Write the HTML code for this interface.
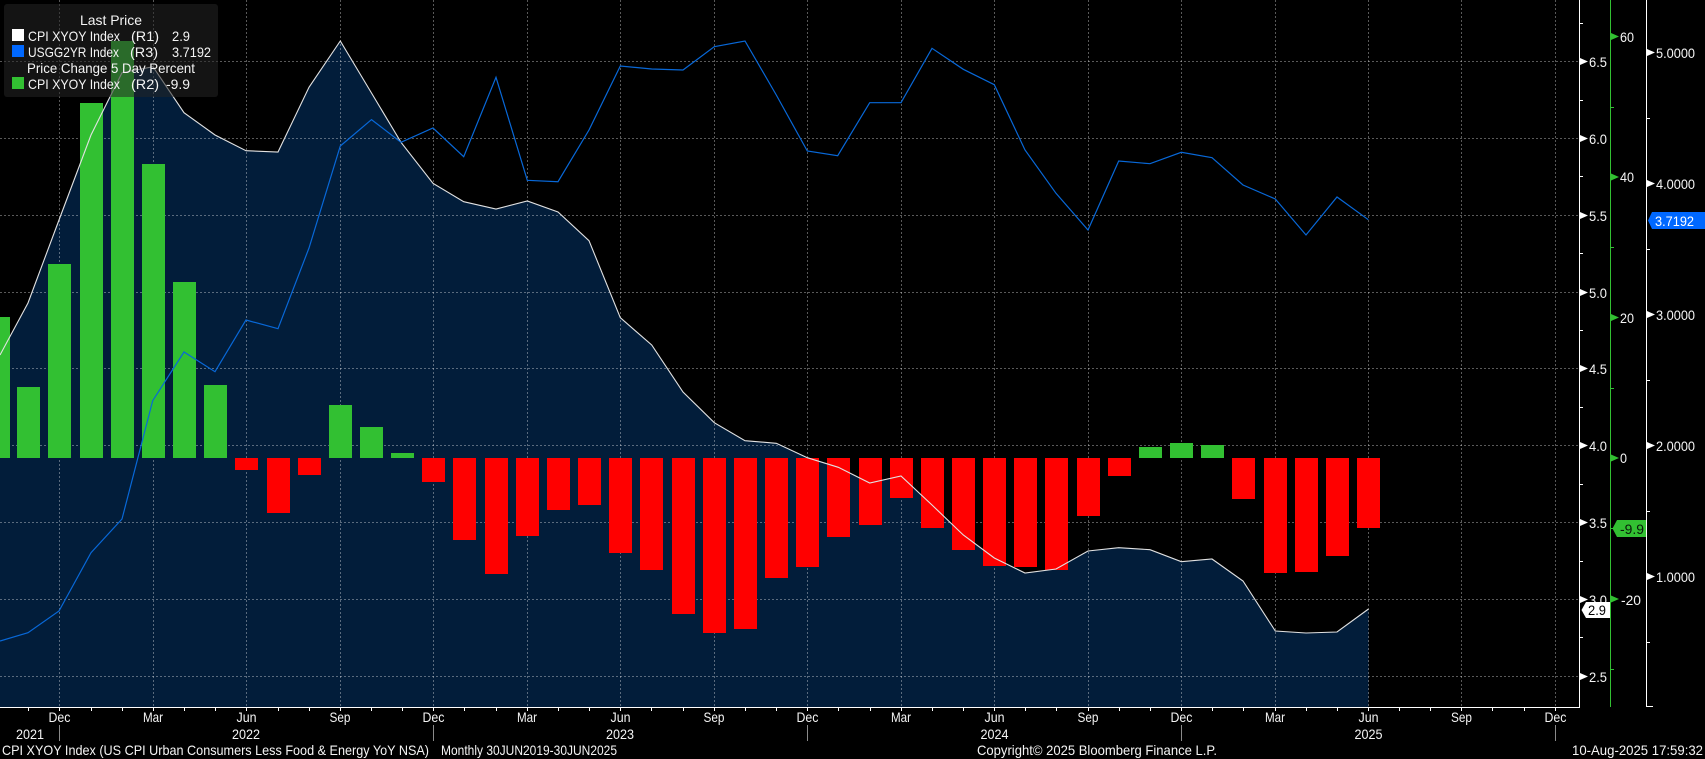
<!DOCTYPE html>
<html lang="en">
<head>
<meta charset="utf-8">
<title>CPI XYOY Index Chart</title>
<style>
html,body{margin:0;padding:0;background:#000;width:1705px;height:759px;overflow:hidden}
svg{display:block;position:absolute;left:0;top:0}
text{font-family:"Liberation Sans",Arial,sans-serif;font-size:14px;fill:#f4f4f4}
</style>
</head>
<body>
<svg width="1705" height="759" viewBox="0 0 1705 759" xmlns="http://www.w3.org/2000/svg">
<rect width="1705" height="759" fill="#000"/>

<!-- area under CPI line -->
<polygon fill="#021d3a" points="0,355 28,303 59,220 91,135 122,72.7 153,66.7 184,112.7 215,135 246,150.7 278,152 309,87.3 340.3,41 371.5,93 401,142.3 433,183.3 463.7,201.7 496,209 527.3,201 558,212 589,240.7 620.3,317.7 651.7,345 683,392 714.3,422.7 745,440.7 776.3,443.3 807.3,457.7 838.3,467.3 869.7,483 901,476 932,505 963.3,535 994.3,558 1025,573 1056,569 1088,551 1118.7,547.7 1150,549.7 1181.3,561.7 1212,559 1243,581 1275.3,631 1306,633 1337,632 1368.5,609 1368.5,707 0,707"/>

<!-- grid -->
<g stroke="#fff" stroke-opacity=".35" stroke-width="1" stroke-dasharray="2 2" fill="none">
<path d="M0 61.5H1579M0 138.5H1579M0 215.5H1579M0 292.5H1579M0 368.5H1579M0 445.5H1579M0 522.5H1579M0 599.5H1579M0 676.5H1579"/>
<path d="M59.5 0V707M153.5 0V707M246.5 0V707M340.5 0V707M433.5 0V707M527.5 0V707M620.5 0V707M714.5 0V707M807.5 0V707M901.5 0V707M994.5 0V707M1088.5 0V707M1181.5 0V707M1275.5 0V707M1368.5 0V707M1461.5 0V707M1555.5 0V707"/>
</g>

<!-- green bars -->
<g fill="#32c032">
<rect x="-13" y="317" width="23" height="141"/>
<rect x="17" y="387" width="23" height="71"/>
<rect x="48" y="264" width="23" height="194"/>
<rect x="80" y="103" width="23" height="355"/>
<rect x="111" y="41" width="23" height="417"/>
<rect x="142" y="164" width="23" height="294"/>
<rect x="173" y="282" width="23" height="176"/>
<rect x="204" y="385" width="23" height="73"/>
<rect x="329" y="405" width="23" height="53"/>
<rect x="360" y="427" width="23" height="31"/>
<rect x="391" y="453" width="23" height="5"/>
<rect x="1139" y="447" width="23" height="11"/>
<rect x="1170" y="443" width="23" height="15"/>
<rect x="1201" y="445" width="23" height="13"/>
</g>
<!-- red bars -->
<g fill="#ff0000">
<rect x="235" y="458" width="23" height="12"/>
<rect x="267" y="458" width="23" height="55"/>
<rect x="298" y="458" width="23" height="17"/>
<rect x="422" y="458" width="23" height="24"/>
<rect x="453" y="458" width="23" height="82"/>
<rect x="485" y="458" width="23" height="116"/>
<rect x="516" y="458" width="23" height="78"/>
<rect x="547" y="458" width="23" height="52"/>
<rect x="578" y="458" width="23" height="47"/>
<rect x="609" y="458" width="23" height="95"/>
<rect x="640" y="458" width="23" height="112"/>
<rect x="672" y="458" width="23" height="156"/>
<rect x="703" y="458" width="23" height="175"/>
<rect x="734" y="458" width="23" height="171"/>
<rect x="765" y="458" width="23" height="120"/>
<rect x="796" y="458" width="23" height="109"/>
<rect x="827" y="458" width="23" height="79"/>
<rect x="859" y="458" width="23" height="67"/>
<rect x="890" y="458" width="23" height="40"/>
<rect x="921" y="458" width="23" height="70"/>
<rect x="952" y="458" width="23" height="92"/>
<rect x="983" y="458" width="23" height="108"/>
<rect x="1014" y="458" width="23" height="109"/>
<rect x="1045" y="458" width="23" height="112"/>
<rect x="1077" y="458" width="23" height="58"/>
<rect x="1108" y="458" width="23" height="18"/>
<rect x="1232" y="458" width="23" height="41"/>
<rect x="1264" y="458" width="23" height="115"/>
<rect x="1295" y="458" width="23" height="114"/>
<rect x="1326" y="458" width="23" height="98"/>
<rect x="1357" y="458" width="23" height="70"/>
</g>

<!-- white CPI line -->
<polyline fill="none" stroke="#e2e2e2" stroke-width="1.1" points="0,355 28,303 59,220 91,135 122,72.7 153,66.7 184,112.7 215,135 246,150.7 278,152 309,87.3 340.3,41 371.5,93 401,142.3 433,183.3 463.7,201.7 496,209 527.3,201 558,212 589,240.7 620.3,317.7 651.7,345 683,392 714.3,422.7 745,440.7 776.3,443.3 807.3,457.7 838.3,467.3 869.7,483 901,476 932,505 963.3,535 994.3,558 1025,573 1056,569 1088,551 1118.7,547.7 1150,549.7 1181.3,561.7 1212,559 1243,581 1275.3,631 1306,633 1337,632 1368.5,609"/>

<!-- blue USGG2YR line -->
<polyline fill="none" stroke="#0868d8" stroke-width="1.2" points="0,641 28,632.7 59,611 91,552.7 122,519 152.7,400.7 184,352 215,371.7 246,320 278,328.7 309,248 340.3,146 371.5,119.6 401,142.3 433,128 463.7,156.7 496,77.3 527.3,180.3 558,181.7 589,130 620.3,66 651.7,69 683,70 714.3,46.7 745,41 776.3,95 807.3,151 837.7,155.7 869.7,102.7 901,102.7 932,48.3 963.3,69.3 994.3,84.7 1025,150 1056,193.3 1088,230 1118.7,161 1150,163.7 1181.3,152.3 1212,157.7 1243,185 1275.3,199 1306,235 1337,197 1368.3,219.7"/>

<!-- legend -->
<rect x="4" y="4" width="214" height="93" rx="3" ry="3" fill="#242424" fill-opacity=".55"/>
<rect x="12" y="29" width="12" height="12" fill="#fff"/>
<rect x="12" y="45" width="12" height="12" fill="#0068ff"/>
<rect x="12" y="77" width="12" height="12" fill="#32c032"/>
<text x="80" y="25" textLength="62" lengthAdjust="spacingAndGlyphs">Last Price</text>
<text x="28" y="41" textLength="92" lengthAdjust="spacingAndGlyphs">CPI XYOY Index</text>
<text x="131" y="41" textLength="28" lengthAdjust="spacingAndGlyphs">(R1)</text>
<text x="172" y="41" textLength="18" lengthAdjust="spacingAndGlyphs">2.9</text>
<text x="28" y="57" textLength="91" lengthAdjust="spacingAndGlyphs">USGG2YR Index</text>
<text x="130" y="57" textLength="28" lengthAdjust="spacingAndGlyphs">(R3)</text>
<text x="172" y="57" textLength="39" lengthAdjust="spacingAndGlyphs">3.7192</text>
<text x="27" y="73" textLength="168" lengthAdjust="spacingAndGlyphs">Price Change 5 Day Percent</text>
<text x="28" y="89" textLength="92" lengthAdjust="spacingAndGlyphs">CPI XYOY Index</text>
<text x="131" y="89" textLength="28" lengthAdjust="spacingAndGlyphs">(R2)</text>
<text x="166" y="89" textLength="24" lengthAdjust="spacingAndGlyphs">-9.9</text>

<!-- axes lines -->
<rect x="0" y="707" width="1580" height="1" fill="#fff"/>
<rect x="1579" y="0" width="1" height="708" fill="#fff"/>
<rect x="1610" y="0" width="1" height="707" fill="#32c032"/>
<rect x="1646" y="0" width="1" height="707" fill="#fff"/>

<!-- bottom ticks -->
<path fill="none" stroke="#fff" stroke-width="1" d="M28.5 708v3M59.5 708v3M91.5 708v3M122.5 708v3M153.5 708v3M184.5 708v3M215.5 708v3M246.5 708v3M278.5 708v3M309.5 708v3M340.5 708v3M371.5 708v3M402.5 708v3M433.5 708v3M464.5 708v3M496.5 708v3M527.5 708v3M558.5 708v3M589.5 708v3M620.5 708v3M651.5 708v3M683.5 708v3M714.5 708v3M745.5 708v3M776.5 708v3M807.5 708v3M838.5 708v3M870.5 708v3M901.5 708v3M932.5 708v3M963.5 708v3M994.5 708v3M1025.5 708v3M1056.5 708v3M1088.5 708v3M1119.5 708v3M1150.5 708v3M1181.5 708v3M1212.5 708v3M1243.5 708v3M1275.5 708v3M1306.5 708v3M1337.5 708v3M1368.5 708v3M1399.5 708v3M1430.5 708v3M1461.5 708v3M1492.5 708v3M1524.5 708v3M1555.5 708v3"/>

<!-- year separators -->
<path fill="none" stroke="#8a8a8a" stroke-width="1" d="M59.5 725V741M433.5 725V741M807.5 725V741M1181.5 725V741M1555.5 725V741"/>

<!-- R1 ticks -->
<path fill="none" stroke="#fff" stroke-width="1" d="M1580 23.5h3M1580 100.5h3M1580 176.5h3M1580 253.5h3M1580 330.5h3M1580 407.5h3M1580 484.5h3M1580 561.5h3M1580 637.5h3"/>
<g fill="#fff">
<polygon points="1580,58 1588,61.5 1580,65"/>
<polygon points="1580,135 1588,138.5 1580,142"/>
<polygon points="1580,212 1588,215.5 1580,219"/>
<polygon points="1580,289 1588,292.5 1580,296"/>
<polygon points="1580,365 1588,368.5 1580,372"/>
<polygon points="1580,442 1588,445.5 1580,449"/>
<polygon points="1580,519 1588,522.5 1580,526"/>
<polygon points="1580,596 1588,599.5 1580,603"/>
<polygon points="1580,673 1588,676.5 1580,680"/>
</g>
<g>
<text x="1589" y="67" textLength="18" lengthAdjust="spacingAndGlyphs">6.5</text>
<text x="1589" y="144" textLength="18" lengthAdjust="spacingAndGlyphs">6.0</text>
<text x="1589" y="221" textLength="18" lengthAdjust="spacingAndGlyphs">5.5</text>
<text x="1589" y="298" textLength="18" lengthAdjust="spacingAndGlyphs">5.0</text>
<text x="1589" y="374" textLength="18" lengthAdjust="spacingAndGlyphs">4.5</text>
<text x="1589" y="451" textLength="18" lengthAdjust="spacingAndGlyphs">4.0</text>
<text x="1589" y="528" textLength="18" lengthAdjust="spacingAndGlyphs">3.5</text>
<text x="1589" y="605" textLength="18" lengthAdjust="spacingAndGlyphs">3.0</text>
<text x="1589" y="682" textLength="18" lengthAdjust="spacingAndGlyphs">2.5</text>
</g>

<!-- R2 ticks -->
<path fill="none" stroke="#32c032" stroke-width="1" d="M1611 107.5h3M1611 247.5h3M1611 388.5h3M1611 528.5h3M1611 669.5h3"/>
<g fill="#32c032">
<polygon points="1611,33 1619,36.5 1611,40"/>
<polygon points="1611,173.5 1619,177 1611,180.5"/>
<polygon points="1611,314 1619,317.5 1611,321"/>
<polygon points="1611,454.5 1619,458 1611,461.5"/>
<polygon points="1611,595.5 1619,599 1611,602.5"/>
</g>
<text x="1620" y="42" textLength="14" lengthAdjust="spacingAndGlyphs">60</text>
<text x="1620" y="182" textLength="14" lengthAdjust="spacingAndGlyphs">40</text>
<text x="1620" y="323" textLength="14" lengthAdjust="spacingAndGlyphs">20</text>
<text x="1620" y="463" textLength="7" lengthAdjust="spacingAndGlyphs">0</text>
<text x="1621" y="605" textLength="20" lengthAdjust="spacingAndGlyphs">-20</text>

<!-- R3 ticks -->
<path fill="none" stroke="#fff" stroke-width="1" d="M1647 118.5h3M1647 249.5h3M1647 380.5h3M1647 511.5h3M1647 642.5h3M1647 706.5h6"/>
<g fill="#fff">
<polygon points="1647,49 1655,52.5 1647,56"/>
<polygon points="1647,180 1655,183.5 1647,187"/>
<polygon points="1647,311 1655,314.5 1647,318"/>
<polygon points="1647,442 1655,445.5 1647,449"/>
<polygon points="1647,573 1655,576.5 1647,580"/>
</g>
<text x="1656" y="58" textLength="39" lengthAdjust="spacingAndGlyphs">5.0000</text>
<text x="1656" y="189" textLength="39" lengthAdjust="spacingAndGlyphs">4.0000</text>
<text x="1656" y="320" textLength="39" lengthAdjust="spacingAndGlyphs">3.0000</text>
<text x="1656" y="451" textLength="39" lengthAdjust="spacingAndGlyphs">2.0000</text>
<text x="1656" y="582" textLength="39" lengthAdjust="spacingAndGlyphs">1.0000</text>

<!-- value tags -->
<polygon points="1648,220.5 1652,212 1705,212 1705,229 1652,229" fill="#0068ff"/>
<text x="1655" y="226" textLength="39" lengthAdjust="spacingAndGlyphs" style="fill:#fff">3.7192</text>
<polygon points="1612.5,528.5 1617,520 1646,520 1646,537 1617,537" fill="#32c032"/>
<text x="1620" y="534" textLength="24" lengthAdjust="spacingAndGlyphs" style="fill:#0a1a0a">-9.9</text>
<polygon points="1581.5,610 1586,602 1610,602 1610,618 1586,618" fill="#fff"/>
<text x="1588" y="615" textLength="18" lengthAdjust="spacingAndGlyphs" style="fill:#000">2.9</text>

<!-- month labels -->
<g text-anchor="middle">
<text x="59.5" y="722" textLength="22" lengthAdjust="spacingAndGlyphs">Dec</text>
<text x="153" y="722" textLength="20" lengthAdjust="spacingAndGlyphs">Mar</text>
<text x="246.5" y="722" textLength="20" lengthAdjust="spacingAndGlyphs">Jun</text>
<text x="340" y="722" textLength="21" lengthAdjust="spacingAndGlyphs">Sep</text>
<text x="433.5" y="722" textLength="22" lengthAdjust="spacingAndGlyphs">Dec</text>
<text x="527" y="722" textLength="20" lengthAdjust="spacingAndGlyphs">Mar</text>
<text x="620.5" y="722" textLength="20" lengthAdjust="spacingAndGlyphs">Jun</text>
<text x="714" y="722" textLength="21" lengthAdjust="spacingAndGlyphs">Sep</text>
<text x="807.5" y="722" textLength="22" lengthAdjust="spacingAndGlyphs">Dec</text>
<text x="901" y="722" textLength="20" lengthAdjust="spacingAndGlyphs">Mar</text>
<text x="994.5" y="722" textLength="20" lengthAdjust="spacingAndGlyphs">Jun</text>
<text x="1088" y="722" textLength="21" lengthAdjust="spacingAndGlyphs">Sep</text>
<text x="1181.5" y="722" textLength="22" lengthAdjust="spacingAndGlyphs">Dec</text>
<text x="1275" y="722" textLength="20" lengthAdjust="spacingAndGlyphs">Mar</text>
<text x="1368.5" y="722" textLength="20" lengthAdjust="spacingAndGlyphs">Jun</text>
<text x="1461.5" y="722" textLength="21" lengthAdjust="spacingAndGlyphs">Sep</text>
<text x="1555.5" y="722" textLength="22" lengthAdjust="spacingAndGlyphs">Dec</text>
<text x="30" y="739" textLength="28" lengthAdjust="spacingAndGlyphs">2021</text>
<text x="246" y="739" textLength="28" lengthAdjust="spacingAndGlyphs">2022</text>
<text x="620" y="739" textLength="28" lengthAdjust="spacingAndGlyphs">2023</text>
<text x="994.5" y="739" textLength="28" lengthAdjust="spacingAndGlyphs">2024</text>
<text x="1368.5" y="739" textLength="28" lengthAdjust="spacingAndGlyphs">2025</text>
</g>

<!-- footer -->
<text x="2" y="755" textLength="427" lengthAdjust="spacingAndGlyphs">CPI XYOY Index (US CPI Urban Consumers Less Food &amp; Energy YoY NSA)</text>
<text x="441" y="755" textLength="176" lengthAdjust="spacingAndGlyphs">Monthly 30JUN2019-30JUN2025</text>
<text x="977" y="755" textLength="240" lengthAdjust="spacingAndGlyphs">Copyright© 2025 Bloomberg Finance L.P.</text>
<text x="1572" y="755" textLength="131" lengthAdjust="spacingAndGlyphs">10-Aug-2025 17:59:32</text>
</svg>
</body>
</html>
